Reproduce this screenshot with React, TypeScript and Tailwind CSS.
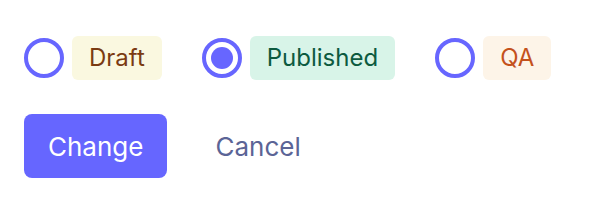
import { useState } from "react";

const options = [
  { id: "draft", label: "Draft", badge: "bg-[#faf8e0] text-[#7a3b12]" },
  { id: "published", label: "Published", badge: "bg-[#d8f4e8] text-[#0c5a3f]" },
  { id: "qa", label: "QA", badge: "bg-[#fdf4e8] text-[#c4511c]" },
];

const App = () => {
  const [status, setStatus] = useState("published");

  return (
    <div className="w-[594px] h-[204px] bg-white px-6 pt-[36px] font-['Inter',sans-serif]">
      <div className="flex items-center gap-10">
        {options.map((opt) => (
          <label key={opt.id} className="flex items-center gap-2 cursor-pointer">
            <span
              onClick={() => setStatus(opt.id)}
              className="w-10 h-10 rounded-full border-4 border-[#6766ff] flex items-center justify-center"
            >
              {status === opt.id && <span className="w-[22px] h-[22px] rounded-full bg-[#6766ff]" />}
            </span>
            <span className={`h-11 px-[17px] rounded-md flex items-center text-2xl ${opt.badge}`}>
              {opt.label}
            </span>
          </label>
        ))}
      </div>

      <div className="flex items-center gap-6 mt-[34px]">
        <button className="h-16 px-6 rounded-lg bg-[#6666ff] text-white text-[26px]">Change</button>
        <button className="h-16 px-6 text-[#5b6496] text-[26px]">Cancel</button>
      </div>
    </div>
  );
};

export default App;
